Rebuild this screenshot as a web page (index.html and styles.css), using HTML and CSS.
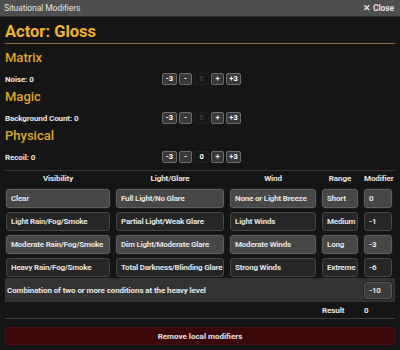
FILE: index.html
```html
<!DOCTYPE html>
<html lang="en">
<head>
    <meta charset="UTF-8">
    <meta name="viewport" content="width=device-width, initial-scale=1.0">
    <title>Situational Modifiers</title>
    <link rel="stylesheet" href="styles.css">
</head>
<body>
    <div class="app">
        <header class="titlebar">
            <span class="title">Situational Modifiers</span>
            <a class="close">&#10005; Close</a>
        </header>

        <main class="content">
            <h1 class="actor">Actor: Gloss</h1>

            <!-- Categorias con contador -->
            <section class="category">
                <h3>Matrix</h3>
                <div class="modifier-row">
                    <span class="label">Noise: 0</span>
                    <div class="stepper">
                        <button class="step wide">-3</button>
                        <button class="step">-</button>
                        <span class="value dim">0</span>
                        <button class="step">+</button>
                        <button class="step wide">+3</button>
                    </div>
                </div>
            </section>

            <section class="category">
                <h3>Magic</h3>
                <div class="modifier-row">
                    <span class="label">Background Count: 0</span>
                    <div class="stepper">
                        <button class="step wide">-3</button>
                        <button class="step">-</button>
                        <span class="value dim">0</span>
                        <button class="step">+</button>
                        <button class="step wide">+3</button>
                    </div>
                </div>
            </section>

            <section class="category">
                <h3>Physical</h3>
                <div class="modifier-row">
                    <span class="label">Recoil: 0</span>
                    <div class="stepper">
                        <button class="step wide">-3</button>
                        <button class="step">-</button>
                        <span class="value">0</span>
                        <button class="step">+</button>
                        <button class="step wide">+3</button>
                    </div>
                </div>
            </section>

            <!-- Tabla de entorno -->
            <div class="env-table">
                <div class="env-head">
                    <span>Visibility</span>
                    <span>Light/Glare</span>
                    <span>Wind</span>
                    <span>Range</span>
                    <span>Modifier</span>
                </div>
                <div class="env-row light">
                    <button class="cell">Clear</button>
                    <button class="cell">Full Light/No Glare</button>
                    <button class="cell">None or Light Breeze</button>
                    <button class="cell">Short</button>
                    <span class="cell">0</span>
                </div>
                <div class="env-row dark">
                    <button class="cell">Light Rain/Fog/Smoke</button>
                    <button class="cell">Partial Light/Weak Glare</button>
                    <button class="cell">Light Winds</button>
                    <button class="cell">Medium</button>
                    <span class="cell">-1</span>
                </div>
                <div class="env-row light">
                    <button class="cell">Moderate Rain/Fog/Smoke</button>
                    <button class="cell">Dim Light/Moderate Glare</button>
                    <button class="cell">Moderate Winds</button>
                    <button class="cell">Long</button>
                    <span class="cell">-3</span>
                </div>
                <div class="env-row dark">
                    <button class="cell">Heavy Rain/Fog/Smoke</button>
                    <button class="cell">Total Darkness/Blinding Glare</button>
                    <button class="cell">Strong Winds</button>
                    <button class="cell">Extreme</button>
                    <span class="cell">-6</span>
                </div>
                <div class="env-combo">
                    <span class="combo-text">Combination of two or more conditions at the heavy level</span>
                    <span class="cell">-10</span>
                </div>
                <div class="env-result">
                    <span class="result-label">Result</span>
                    <span class="result-value">0</span>
                </div>
            </div>

            <button class="remove">Remove local modifiers</button>
        </main>
    </div>
</body>
</html>
```

FILE: styles.css
```css
/* Estilos Generales */
body {
    margin: 0;
    padding: 0;
    background-color: #151515;
    color: #ddd;
    font-family: "Roboto", sans-serif;
    font-size: 8px;
    letter-spacing: -0.1px;
}

.app {
    width: 400px;
    height: 350px;
    overflow: hidden;
    background-color: #151515;
}

/* Barra de titulo */
.titlebar {
    height: 16px;
    display: flex;
    align-items: center;
    justify-content: space-between;
    padding: 0 6px 0 4px;
    background-color: #4e4e4e;
    border-bottom: 1px solid #2e2e2e;
    color: #e0e0e0;
    font-size: 8.5px;
}

.close {
    font-weight: bold;
}

/* Contenido */
.content {
    padding: 0 5px;
}

.actor {
    margin: 4px 0 0;
    line-height: 22px;
    font-size: 16.5px;
    font-weight: bold;
    letter-spacing: 0;
    color: #efb22c;
    border-bottom: 1px solid #8a6a35;
}

.category h3 {
    margin: 2px 0 0;
    line-height: 18px;
    font-size: 13px;
    font-weight: 500;
    letter-spacing: 0;
    color: #dfa52a;
}

.category:first-of-type h3 {
    margin-top: 5px;
}

.modifier-row {
    display: flex;
    align-items: center;
    height: 14px;
    margin-top: 5px;
}

.label {
    width: 157px;
    font-weight: bold;
    color: #e6e6e6;
}

.stepper {
    display: flex;
    gap: 2px;
}

.step,
.value {
    box-sizing: border-box;
    width: 13px;
    height: 12px;
    padding: 0;
    font-family: inherit;
    font-size: 7.5px;
    font-weight: bold;
    line-height: 10px;
    text-align: center;
    color: #fff;
    background-color: #383838;
    border: 1px solid #6c6c6c;
    border-radius: 2px;
}

.step.wide,
.value {
    width: 15px;
}

.value {
    background-color: #171717;
    border-color: #222;
}

.value.dim {
    color: #4a4a4a;
    font-weight: normal;
}

/* Tabla de entorno */
.env-table {
    margin-top: 6px;
    border-top: 1px solid #353535;
}

.env-head,
.env-row,
.env-combo,
.env-result {
    display: grid;
    grid-template-columns: 104px 108px 86px 36px 28px;
    column-gap: 6px;
    padding-left: 1px;
    align-items: center;
}

.env-head {
    height: 15px;
    font-weight: bold;
    text-align: center;
    color: #e6e6e6;
}

.env-row {
    height: 23px;
}

.cell {
    box-sizing: border-box;
    height: 19px;
    padding: 0 4px;
    font-family: inherit;
    font-size: 8px;
    font-weight: bold;
    letter-spacing: -0.2px;
    line-height: 17px;
    text-align: left;
    white-space: nowrap;
    overflow: hidden;
    color: #e2e2e2;
    border-radius: 3px;
}

.env-row .cell {
    margin-top: 1px;
}

.light .cell {
    background-color: #474747;
    border: 1px solid #5f5f5f;
    box-shadow: 0 0 0 1px #1d1d1d;
}

.dark .cell {
    background-color: #262626;
    border: 1px solid #474747;
    box-shadow: 0 0 0 1px #111;
}

.env-combo {
    height: 24px;
    background-color: #333;
}

.combo-text {
    grid-column: 1 / 5;
    padding-left: 1px;
    font-weight: bold;
    color: #e6e6e6;
}

.env-combo .cell {
    height: 17px;
    line-height: 15px;
    background-color: #3b3b3b;
    border: 1px solid #555;
    box-shadow: 0 0 0 1px #222;
}

.env-result {
    height: 16px;
    border-bottom: 1px solid #3a3a3a;
    font-weight: bold;
    color: #e6e6e6;
}

.result-label {
    grid-column: 4;
}

.result-value {
    grid-column: 5;
}

/* Boton rojo */
.remove {
    display: block;
    box-sizing: border-box;
    width: 100%;
    height: 18px;
    margin-top: 8px;
    padding: 0;
    font-family: inherit;
    font-size: 8px;
    font-weight: bold;
    color: #e6e6e6;
    background-color: #3a0808;
    border: 1px solid #4a1010;
    border-radius: 2px;
}
```
